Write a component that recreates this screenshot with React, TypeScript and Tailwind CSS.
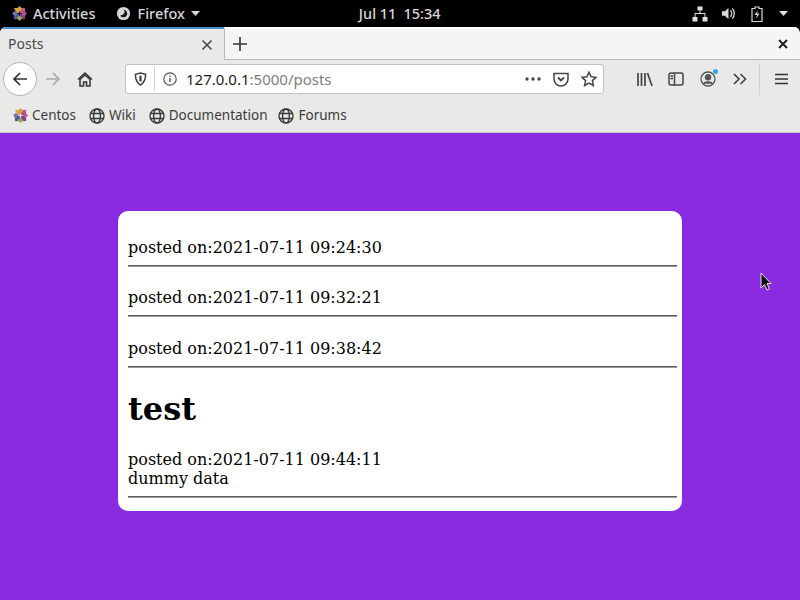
import React from "react";

const ui = { fontFamily: '"Noto Sans", "Open Sans", sans-serif' };
const serif = { fontFamily: '"DejaVu Serif", serif' };

function CentosLogo({ size = 15 }: { size?: number }) {
  return (
    <svg width={size} height={size} viewBox="0 0 16 16">
      <path d="M2 2h5.5v5.5H5Z" fill="#d8a53a" />
      <path d="M14 2v5.5H8.5V2Z" fill="#b3568f" />
      <path d="M14 14H8.5V8.5H14Z" fill="#8a3f86" />
      <path d="M2 14V8.5h5.5V14Z" fill="#4d5fa0" />
      <path d="M8 0l3 3-3 3-3-3Z" fill="#d8a53a" />
      <path d="M16 8l-3 3-3-3 3-3Z" fill="#b3568f" />
      <path d="M8 16l-3-3 3-3 3 3Z" fill="#8fae45" />
      <path d="M0 8l3-3 3 3-3 3Z" fill="#7b6fb0" />
    </svg>
  );
}

function Globe() {
  return (
    <svg width="16" height="16" viewBox="0 0 16 16" fill="none" stroke="#3a3a3a" strokeWidth="1.4">
      <circle cx="8" cy="8" r="7" />
      <ellipse cx="8" cy="8" rx="3.4" ry="7" />
      <path d="M1.5 5.5h13M1.5 10.5h13" />
    </svg>
  );
}

function Bookmark({ icon, label, className }: { icon: React.ReactNode; label: string; className: string }) {
  return (
    <div className={`flex items-center ${className}`}>
      <span className="flex w-[16px] justify-center">{icon}</span>
      <span className="ml-[4px] text-[13.5px] text-[#3c3c3c]">{label}</span>
    </div>
  );
}

function Chrome() {
  return (
    <div className="bg-black" style={ui}>
      <div className="flex h-[27px] items-center bg-black text-[14.5px] text-[#d8d8d8]">
        <span className="ml-[12px]"><CentosLogo size={15} /></span>
        <span className="ml-[6px] font-medium">Activities</span>
        <svg className="ml-[21px]" width="15" height="15" viewBox="0 0 16 16">
          <circle cx="8" cy="8" r="7" fill="#d8d8d8" />
          <path d="M8 4 A4 4 0 1 1 4.5 10 A5 5 0 0 0 9 7.5 A3 3 0 0 0 8 4Z" fill="#111" />
        </svg>
        <span className="ml-[6px] font-medium">Firefox</span>
        <svg className="ml-[6px]" width="9" height="5" viewBox="0 0 9 5"><path d="M0 0h9L4.5 5Z" fill="#d8d8d8" /></svg>
        <span className="ml-[159px] font-medium">Jul 11</span>
        <span className="ml-[7px] font-medium">15:34</span>
        <svg className="ml-[251px]" width="16" height="16" viewBox="0 0 16 16" fill="#e0e0e0">
          <rect x="5.5" y="0.5" width="5" height="4" />
          <rect x="0.5" y="11" width="5" height="4.5" />
          <rect x="10.5" y="11" width="5" height="4.5" />
          <path d="M7.5 4.5h1V7H13.5v4h-1V8H3.5v3h-1V7h5Z" />
        </svg>
        <svg className="ml-[13px]" width="15" height="15" viewBox="0 0 16 16" fill="#d8d8d8">
          <path d="M1 5.5h3L8 2v12L4 10.5H1Z" />
          <path d="M10 4.5a5 5 0 0 1 0 7M12 2.5a8 8 0 0 1 0 11" fill="none" stroke="#d8d8d8" strokeWidth="1.4" />
        </svg>
        <svg className="ml-[15px]" width="12" height="16" viewBox="0 0 12 16">
          <path d="M4 1h4v1.5h3v13H1v-13h3Z" fill="none" stroke="#d8d8d8" strokeWidth="1.2" />
          <path d="M7 4L3.5 9H6l-1 4 3.5-5.5H6Z" fill="#d8d8d8" />
        </svg>
        <svg className="ml-[16px]" width="9" height="5" viewBox="0 0 9 5"><path d="M0 0h9L4.5 5Z" fill="#e0e0e0" /></svg>
      </div>

      <div className="flex h-[33px] overflow-hidden rounded-t-[6px] bg-[#f5f5f5]">
        <div className="flex w-[224px] items-center border-t-[2px] border-[#4a8fd0] bg-[#e9e9e7] pb-[2px] pl-[8px] pr-[11px]">
          <span className="flex-1 text-[14px] text-[#4a4a4a]">Posts</span>
          <svg className="mt-[2px]" width="12" height="12" viewBox="0 0 12 12" stroke="#4a4a4a" strokeWidth="1.6"><path d="M1.5 1.5l9 9M10.5 1.5l-9 9" /></svg>
        </div>
        <div className="flex flex-1 items-center border-b border-l border-t-[2px] border-b-[#b8b8b8] border-l-[#b8b8b8] border-t-white pl-[8px] pr-[12px]">
          <svg width="14" height="14" viewBox="0 0 14 14" stroke="#333" strokeWidth="1.6"><path d="M7 0v14M0 7h14" /></svg>
          <span className="flex-1" />
          <svg width="10" height="10" viewBox="0 0 10 10" stroke="#222" strokeWidth="2"><path d="M1 1l8 8M9 1l-8 8" /></svg>
        </div>
      </div>

      <div className="flex h-[38px] items-center bg-[#e9e9e7] pl-[3px]">
        <div className="flex h-[34px] w-[34px] items-center justify-center rounded-full border border-[#b5b5b5] bg-white">
          <svg width="16" height="16" viewBox="0 0 16 16" fill="none" stroke="#333" strokeWidth="1.7"><path d="M15 8H2M8 2L2 8l6 6" /></svg>
        </div>
        <svg className="ml-[8px]" width="16" height="16" viewBox="0 0 16 16" fill="none" stroke="#a9aaa8" strokeWidth="1.7"><path d="M1 8h13M8 2l6 6-6 6" /></svg>
        <svg className="ml-[16px]" width="16" height="16" viewBox="0 0 16 16" fill="#333">
          <path d="M8 1L0.5 8l1 1L8 3l6.5 6 1-1Z" />
          <path d="M3 8.5L8 4l5 4.5V15H9.5v-4h-3v4H3Z" fill="none" stroke="#333" strokeWidth="1.5" />
        </svg>
        <div className="ml-[32px] flex h-[30px] w-[479px] items-center rounded-[3px] border border-[#c2c2c2] bg-white">
          <svg className="ml-[8px]" width="13" height="14" viewBox="0 0 14 15" fill="none" stroke="#3a3a3a" strokeWidth="1.6">
            <path d="M1.5 2.5L7 1l5.5 1.5c0 5-1 9-5.5 11.5C2.5 11.5 1.5 7.5 1.5 2.5Z" />
            <path d="M7 4v6" strokeWidth="2.4" />
          </svg>
          <span className="ml-[7px] h-[24px] w-px bg-[#d0d0d0]" />
          <svg className="ml-[8px]" width="14" height="14" viewBox="0 0 14 14" fill="none" stroke="#555" strokeWidth="1.2">
            <circle cx="7" cy="7" r="6.2" />
            <path d="M7 6v4.2M7 3.5v1.4" strokeWidth="1.4" />
          </svg>
          <span className="ml-[9px] flex-1 text-[15px]">
            <span className="text-[#1c1c1c]">127.0.0.1</span>
            <span className="text-[#7d7d7d]">:5000/posts</span>
          </span>
          <svg width="16" height="4" viewBox="0 0 16 4" fill="#444"><circle cx="2" cy="2" r="1.7" /><circle cx="8" cy="2" r="1.7" /><circle cx="14" cy="2" r="1.7" /></svg>
          <svg className="ml-[12px]" width="16" height="15" viewBox="0 0 16 15" fill="none" stroke="#444" strokeWidth="1.5">
            <path d="M1 1.5h14v5.5a7 7 0 0 1-14 0Z" />
            <path d="M5 5.5l3 3 3-3" strokeWidth="1.8" />
          </svg>
          <svg className="ml-[12px] mr-[6px]" width="16" height="16" viewBox="0 0 16 16" fill="none" stroke="#444" strokeWidth="1.5">
            <path d="M8 1.2l2.1 4.5 4.9.6-3.6 3.3 1 4.9L8 12.1l-4.4 2.4 1-4.9L1 6.3l4.9-.6Z" />
          </svg>
        </div>
        <svg className="ml-[33px]" width="16" height="15" viewBox="0 0 16 15" stroke="#444" strokeWidth="1.7"><path d="M1 1v13M4.5 1v13M8 1v13M10.5 1l4.5 13" /></svg>
        <svg className="ml-[15px]" width="16" height="14" viewBox="0 0 16 14" fill="none" stroke="#444" strokeWidth="1.5">
          <rect x="1" y="1" width="14" height="12" rx="2" />
          <path d="M6.5 1v12M2.5 4h2.5M2.5 6.5h2.5" />
        </svg>
        <div className="relative ml-[16px] h-[16px] w-[16px]">
          <svg width="16" height="16" viewBox="0 0 16 16" fill="none" stroke="#555" strokeWidth="1.3">
            <circle cx="8" cy="8" r="7" />
            <circle cx="8" cy="6.3" r="2.6" fill="#555" />
            <path d="M3.6 12.8c1-2.6 7.8-2.6 8.8 0" fill="#555" />
          </svg>
          <span className="absolute right-[-2px] top-[-2px] h-[5px] w-[5px] rounded-full bg-[#2fa9e0]" />
        </div>
        <svg className="ml-[17px]" width="14" height="12" viewBox="0 0 14 12" fill="none" stroke="#444" strokeWidth="1.7"><path d="M1 1l5 5-5 5M7.5 1l5 5-5 5" /></svg>
        <span className="ml-[12px] h-[32px] w-px bg-[#cfcfcd]" />
        <svg className="ml-[15px]" width="13" height="12" viewBox="0 0 13 12" stroke="#333" strokeWidth="1.6"><path d="M0 1.5h13M0 6h13M0 10.5h13" /></svg>
      </div>

      <div className="flex h-[35px] items-center border-b border-[#c9c9c9] bg-[#e9e9e7] pl-[12px] pt-[1px]">
        <Bookmark icon={<CentosLogo size={15} />} label="Centos" className="" />
        <Bookmark icon={<Globe />} label="Wiki" className="ml-[13px]" />
        <Bookmark icon={<Globe />} label="Documentation" className="ml-[13px]" />
        <Bookmark icon={<Globe />} label="Forums" className="ml-[11px]" />
      </div>
    </div>
  );
}

function Post({ date, title, body, last }: { date: string; title?: string; body?: string; last?: boolean }) {
  return (
    <div className={last ? "" : "mb-[21.4px]"}>
      {title && <h1 className="mb-[21.4px] mt-[23.4px] text-[32px] font-bold leading-[37px] text-black">{title}</h1>}
      <p className="text-[16px] leading-[19px] text-black">posted on:{date}</p>
      {body && <p className="text-[16px] leading-[19px] text-black">{body}</p>}
      <hr className="mt-[8px] h-[2px] border-0 border-t border-b border-t-[#5c5c5c] border-b-[#9a9a9a] bg-[#5c5c5c]" />
    </div>
  );
}

export default function App() {
  return (
    <div className="relative h-[600px] w-[800px] overflow-hidden bg-[#8a2be2]">
      <Chrome />
      <div className="mx-auto mt-[78px] w-[564px] rounded-[10px] bg-white pb-[13px] pl-[10px] pr-[5px] pt-[27px]" style={serif}>
        <Post date="2021-07-11 09:24:30" />
        <Post date="2021-07-11 09:32:21" />
        <Post date="2021-07-11 09:38:42" />
        <Post date="2021-07-11 09:44:11" title="test" body="dummy data" last />
      </div>
      <svg className="absolute left-[760px] top-[272px]" width="12" height="19" viewBox="0 0 12 19">
        <path d="M1 1v15l3.5-3.5 2.5 5.5 2.5-1-2.5-5.5H11Z" fill="#111" stroke="#e8e0f0" strokeWidth="1" />
      </svg>
    </div>
  );
}
